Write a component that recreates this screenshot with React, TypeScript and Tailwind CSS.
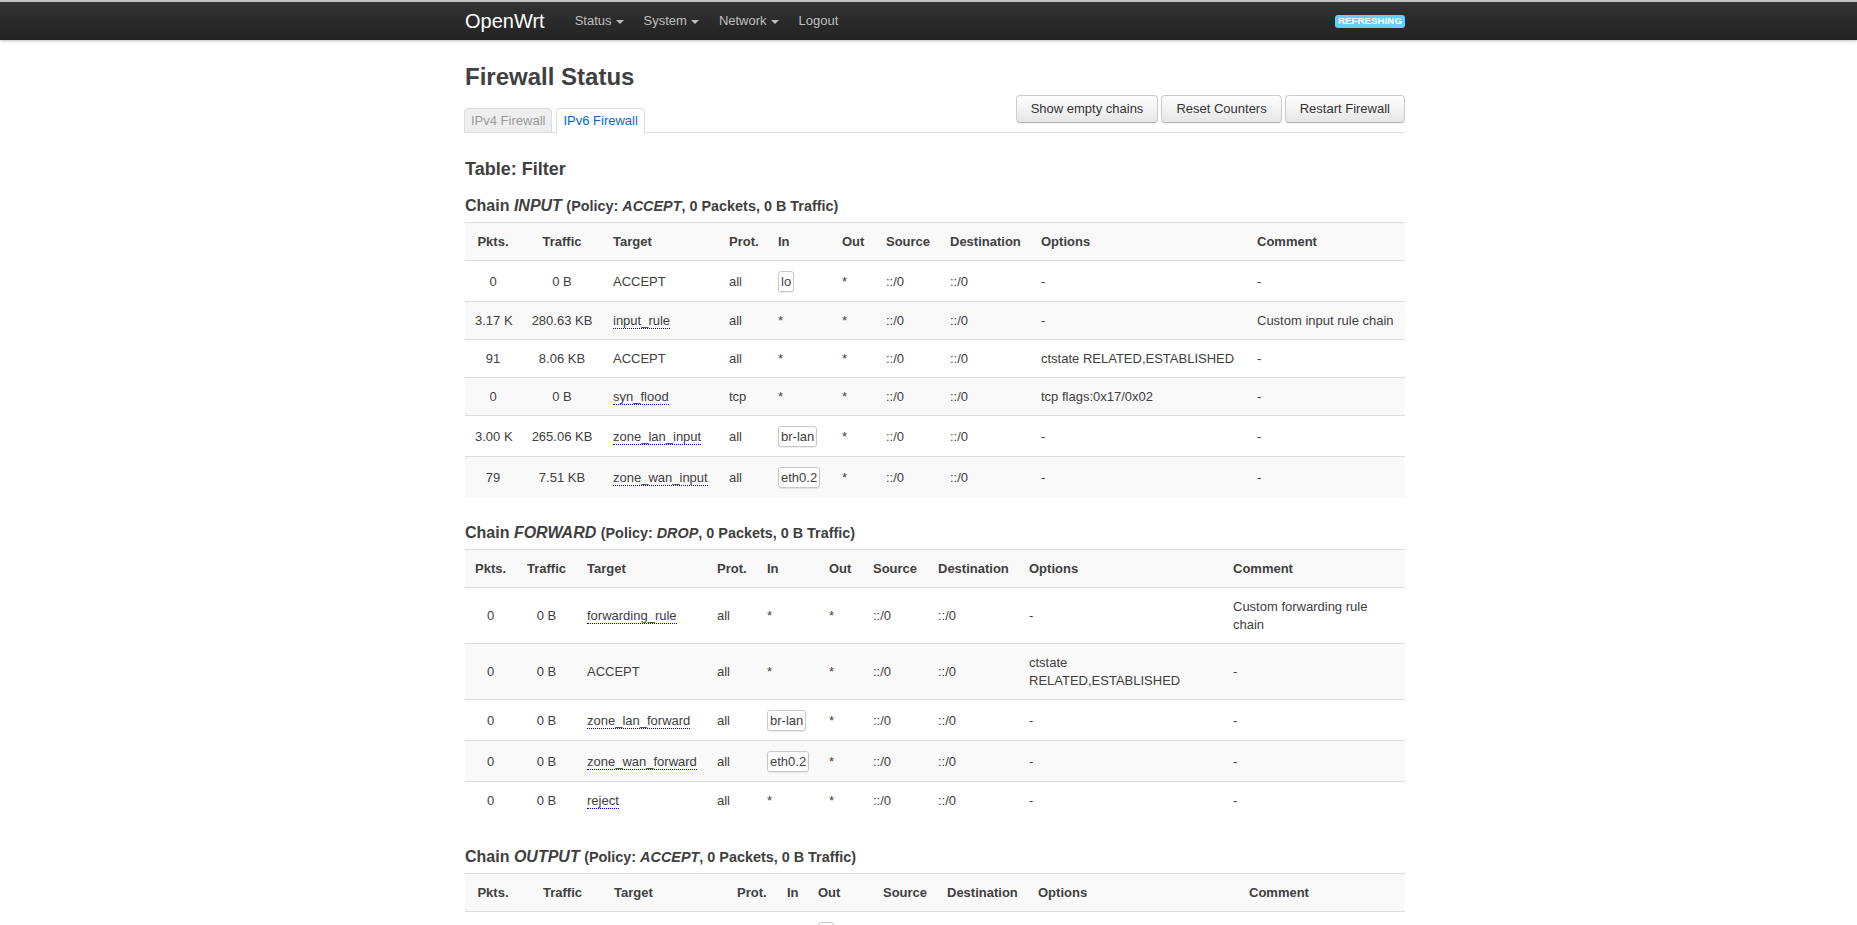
import React from "react";

type Rule = {
  pkts: string;
  traffic: string;
  target: string;
  link?: boolean;
  prot: string;
  inIf: string;
  outIf: string;
  options: string;
  comment: string;
};

type Chain = {
  name: string;
  policy: string;
  cols: number[];
  top: string;
  wrap?: boolean;
  rules: Rule[];
};

const chains: Chain[] = [
  {
    name: "INPUT",
    policy: "ACCEPT",
    cols: [56, 82, 116, 49, 64, 44, 64, 91, 216, 158],
    top: "mt-[11px]",
    rules: [
      { pkts: "0", traffic: "0 B", target: "ACCEPT", prot: "all", inIf: "lo", outIf: "*", options: "-", comment: "-" },
      { pkts: "3.17 K", traffic: "280.63 KB", target: "input_rule", link: true, prot: "all", inIf: "*", outIf: "*", options: "-", comment: "Custom input rule chain" },
      { pkts: "91", traffic: "8.06 KB", target: "ACCEPT", prot: "all", inIf: "*", outIf: "*", options: "ctstate RELATED,ESTABLISHED", comment: "-" },
      { pkts: "0", traffic: "0 B", target: "syn_flood", link: true, prot: "tcp", inIf: "*", outIf: "*", options: "tcp flags:0x17/0x02", comment: "-" },
      { pkts: "3.00 K", traffic: "265.06 KB", target: "zone_lan_input", link: true, prot: "all", inIf: "br-lan", outIf: "*", options: "-", comment: "-" },
      { pkts: "79", traffic: "7.51 KB", target: "zone_wan_input", link: true, prot: "all", inIf: "eth0.2", outIf: "*", options: "-", comment: "-" },
    ],
  },
  {
    name: "FORWARD",
    policy: "DROP",
    cols: [51, 61, 130, 50, 62, 44, 65, 91, 204, 182],
    top: "mt-[24px]",
    wrap: true,
    rules: [
      { pkts: "0", traffic: "0 B", target: "forwarding_rule", link: true, prot: "all", inIf: "*", outIf: "*", options: "-", comment: "Custom forwarding rule chain" },
      { pkts: "0", traffic: "0 B", target: "ACCEPT", prot: "all", inIf: "*", outIf: "*", options: "ctstate RELATED,ESTABLISHED", comment: "-" },
      { pkts: "0", traffic: "0 B", target: "zone_lan_forward", link: true, prot: "all", inIf: "br-lan", outIf: "*", options: "-", comment: "-" },
      { pkts: "0", traffic: "0 B", target: "zone_wan_forward", link: true, prot: "all", inIf: "eth0.2", outIf: "*", options: "-", comment: "-" },
      { pkts: "0", traffic: "0 B", target: "reject", link: true, prot: "all", inIf: "*", outIf: "*", options: "-", comment: "-" },
    ],
  },
  {
    name: "OUTPUT",
    policy: "ACCEPT",
    cols: [56, 83, 123, 50, 31, 65, 64, 91, 211, 166],
    top: "mt-[26px]",
    rules: [
      { pkts: "0", traffic: "0 B", target: "ACCEPT", prot: "all", inIf: "*", outIf: "lo", options: "-", comment: "-" },
      { pkts: "2.81 K", traffic: "231.45 KB", target: "output_rule", link: true, prot: "all", inIf: "*", outIf: "*", options: "-", comment: "Custom output rule chain" },
      { pkts: "1.06 K", traffic: "89.12 KB", target: "ACCEPT", prot: "all", inIf: "*", outIf: "*", options: "ctstate RELATED,ESTABLISHED", comment: "-" },
      { pkts: "1.64 K", traffic: "118.70 KB", target: "zone_lan_output", link: true, prot: "all", inIf: "*", outIf: "br-lan", options: "-", comment: "-" },
      { pkts: "102", traffic: "9.37 KB", target: "zone_wan_output", link: true, prot: "all", inIf: "*", outIf: "eth0.2", options: "-", comment: "-" },
    ],
  },
];

const headers = ["Pkts.", "Traffic", "Target", "Prot.", "In", "Out", "Source", "Destination", "Options", "Comment"];

const Iface: React.FC<{ name: string }> = ({ name }) =>
  name === "*" ? (
    <>*</>
  ) : (
    <span className="inline-block rounded-[3px] border border-[#c8c8c8] bg-white px-[2px] align-middle leading-[19px] shadow-[0_1px_1px_rgba(0,0,0,0.08)]">
      {name}
    </span>
  );

const cell = "border-t border-[#ddd] px-[10px] pt-[10px] pb-[9px] align-middle leading-[18px]";

const ChainTable: React.FC<{ chain: Chain }> = ({ chain }) => (
  <div>
    <h4 className={`${chain.top} mb-[4px] text-[16px] font-bold leading-[24px] text-[#404040]`}>
      Chain <em>{chain.name}</em>{" "}
      <span className="text-[14.4px]">
        (Policy: <em>{chain.policy}</em>, 0 Packets, 0 B Traffic)
      </span>
    </h4>
    <table className="w-full table-fixed border-collapse text-[13px] text-[#404040]">
      <colgroup>
        {chain.cols.map((w, i) => (
          <col key={i} style={{ width: w }} />
        ))}
      </colgroup>
      <thead>
        <tr className="bg-[#f9f9f9]">
          {headers.map((h, i) => (
            <th key={h} className={`${cell} font-bold ${i < 2 ? "text-center" : "text-left"}`}>
              {h}
            </th>
          ))}
        </tr>
      </thead>
      <tbody>
        {chain.rules.map((r, i) => {
          const td = `${cell} ${chain.wrap ? "" : "whitespace-nowrap"}`;
          return (
            <tr key={i} className={i % 2 === 1 ? "bg-[#f9f9f9]" : "bg-white"}>
              <td className={`${td} text-center`}>{r.pkts}</td>
              <td className={`${td} text-center`}>{r.traffic}</td>
              <td className={td}>
                {r.link ? <span className="border-b border-dotted border-[#0000ff]">{r.target}</span> : r.target}
              </td>
              <td className={td}>{r.prot}</td>
              <td className={td}>
                <Iface name={r.inIf} />
              </td>
              <td className={td}>
                <Iface name={r.outIf} />
              </td>
              <td className={td}>::/0</td>
              <td className={td}>::/0</td>
              <td className={td}>{r.options}</td>
              <td className={td}>{r.comment}</td>
            </tr>
          );
        })}
      </tbody>
    </table>
  </div>
);

const Caret = () => (
  <span className="ml-[4px] inline-block h-0 w-0 border-x-[4px] border-t-[4px] border-x-transparent border-t-[#bfbfbf] align-middle" />
);

export default function App() {
  return (
    <div className="min-h-screen bg-white font-['Liberation_Sans',Arial,sans-serif] text-[13px] text-[#404040]">
      <div className="h-[40px] border-t-2 border-[#c4c4c4] bg-linear-to-b from-[#333333] to-[#222222] shadow-[0_1px_3px_rgba(0,0,0,0.25)]">
        <div className="h-full pl-[13px]">
          <div className="mx-auto flex h-full w-[940px] items-center">
            <span className="pr-[20px] text-[20px] leading-[38px] text-white">OpenWrt</span>
            <nav className="flex text-[13px] text-[#bfbfbf]">
              <span className="px-[10px]">
                Status
                <Caret />
              </span>
              <span className="px-[10px]">
                System
                <Caret />
              </span>
              <span className="px-[10px]">
                Network
                <Caret />
              </span>
              <span className="px-[10px]">Logout</span>
            </nav>
            <span className="ml-auto rounded-[3px] bg-[#62cffc] px-[3px] pt-px pb-[2px] text-[9.75px] font-bold uppercase leading-[10px] text-white">
              Refreshing
            </span>
          </div>
        </div>
      </div>

      <div className="pl-[13px]">
        <div className="mx-auto w-[940px] pb-[40px]">
          <h2 className="mt-[19px] text-[24px] font-bold leading-[36px] text-[#404040]">Firewall Status</h2>

          <div className="flex items-end justify-between border-b border-[#ddd]">
            <ul className="-mb-px ml-[-1px] flex gap-[4px]">
              <li className="rounded-t-[4px] border border-[#ddd] bg-[#eeeeee] px-[6px] leading-[23px] text-[#999]">
                IPv4 Firewall
              </li>
              <li className="rounded-t-[4px] border border-[#ddd] border-b-white bg-white px-[6px] leading-[23px] text-[#0069d6]">
                IPv6 Firewall
              </li>
            </ul>
            <div className="mb-[9px] flex gap-[3px]">
              {["Show empty chains", "Reset Counters", "Restart Firewall"].map((b) => (
                <button
                  key={b}
                  className="rounded-[4px] border border-[#ccc] border-b-[#b3b3b3] bg-linear-to-b from-white to-[#e6e6e6] px-[14px] py-[4px] text-[13px] leading-[18px] text-[#333] shadow-[inset_0_1px_0_rgba(255,255,255,0.2),0_1px_2px_rgba(0,0,0,0.05)]"
                >
                  {b}
                </button>
              ))}
            </div>
          </div>

          <h3 className="mt-[23px] text-[18px] font-bold leading-[27px] text-[#404040]">Table: Filter</h3>

          {chains.map((c) => (
            <ChainTable key={c.name} chain={c} />
          ))}
        </div>
      </div>
    </div>
  );
}
